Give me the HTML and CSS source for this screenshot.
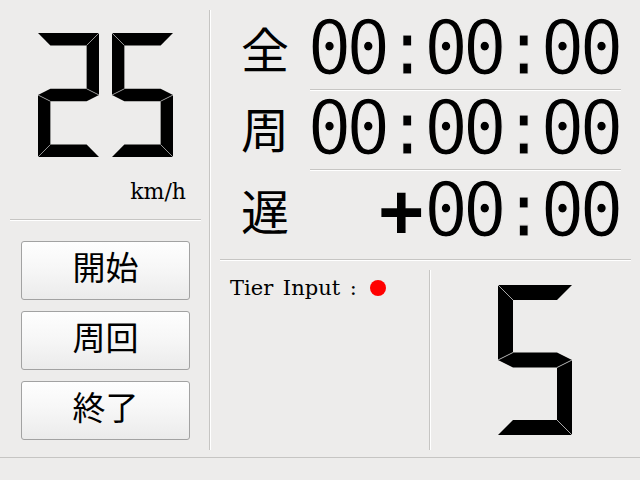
FILE: index.html
```html
<!DOCTYPE html>
<html lang="ja">
<head>
<meta charset="utf-8">
<title>Cycle Meter</title>
<link rel="stylesheet" href="styles.css">
</head>
<body>
<svg class="defs" width="0" height="0">
  <defs>
    <symbol id="d2" viewBox="0 0 74 150">
      <polygon points="0,0 74,0 59,15 15,15"/>
      <polygon points="74,0 74,75 59,67.5 59,15"/>
      <polygon points="0,75 15,67.5 59,67.5 74,75 59,82.5 15,82.5"/>
      <polygon points="0,75 15,82.5 15,135 0,150"/>
      <polygon points="0,150 15,135 59,135 74,150"/>
      <g class="seam">
        <line x1="74" y1="0" x2="59" y2="15"/>
        <line x1="74" y1="75" x2="59" y2="67.5"/>
        <line x1="0" y1="75" x2="15" y2="82.5"/>
        <line x1="0" y1="150" x2="15" y2="135"/>
      </g>
    </symbol>
    <symbol id="d5" viewBox="0 0 74 150">
      <polygon points="0,0 74,0 59,15 15,15"/>
      <polygon points="0,0 15,15 15,67.5 0,75"/>
      <polygon points="0,75 15,67.5 59,67.5 74,75 59,82.5 15,82.5"/>
      <polygon points="74,75 74,150 59,135 59,82.5"/>
      <polygon points="0,150 15,135 59,135 74,150"/>
      <g class="seam">
        <line x1="0" y1="0" x2="15" y2="15"/>
        <line x1="0" y1="75" x2="15" y2="67.5"/>
        <line x1="74" y1="75" x2="59" y2="82.5"/>
        <line x1="74" y1="150" x2="59" y2="135"/>
      </g>
    </symbol>
  </defs>
</svg>
<div class="window">
  <div class="main">
    <div class="left">
      <div class="speed">
        <div class="lcd-speed">
          <svg viewBox="0 0 74 150" preserveAspectRatio="none"><use href="#d2"/></svg>
          <svg viewBox="0 0 74 150" preserveAspectRatio="none"><use href="#d5"/></svg>
        </div>
        <div class="unit">km/h</div>
      </div>
      <div class="hsep"></div>
      <div class="buttons">
        <div class="btn">開始</div>
        <div class="btn">周回</div>
        <div class="btn">終了</div>
      </div>
    </div>
    <div class="vsep"></div>
    <div class="right">
      <div class="times">
        <div class="label r1">全</div>
        <div class="time r1"><span>00:00:00</span></div>
        <div class="tsep s1"></div>
        <div class="label r2">周</div>
        <div class="time r2"><span>00:00:00</span></div>
        <div class="tsep s2"></div>
        <div class="label r3">遅</div>
        <div class="time r3"><span><span class="plus">+</span>00:00</span></div>
      </div>
      <div class="hsep wide"></div>
      <div class="bottom">
        <div class="tier">Tier Input : <span class="dot"></span></div>
        <div class="vsep short"></div>
        <div class="gear">
          <svg viewBox="0 0 74 150"><use href="#d5"/></svg>
        </div>
      </div>
    </div>
  </div>
  <div class="status"></div>
</div>
</body>
</html>
```

FILE: styles.css
```css
html, body {
  margin: 0;
  padding: 0;
}
body {
  width: 640px;
  height: 480px;
  overflow: hidden;
  background: #edeceb;
  font-family: "DejaVu Serif", serif;
  color: #000;
}
.defs {
  position: absolute;
  width: 0;
  height: 0;
}
.seam line {
  stroke: #a8a8a8;
  stroke-width: 1;
}
.window {
  display: flex;
  flex-direction: column;
  height: 480px;
}
.main {
  display: flex;
  height: 457px;
  box-sizing: border-box;
  padding: 10px 0 7px 0;
}
.left {
  flex: 0 0 209px;
  width: 209px;
  box-sizing: border-box;
  padding: 0 8px 0 10px;
  display: flex;
  flex-direction: column;
}
.speed {
  height: 209px;
  display: flex;
  flex-direction: column;
}
.lcd-speed {
  display: flex;
  justify-content: center;
  gap: 13px;
  margin-top: 23px;
  height: 124px;
}
.lcd-speed svg {
  width: 61px;
  height: 124px;
  display: block;
}
.unit {
  text-align: right;
  padding-right: 15px;
  margin-top: 22px;
  font-size: 22px;
  line-height: 26px;
}
.hsep {
  height: 0;
  border-top: 1px solid #c6c5c3;
  border-bottom: 1px solid #ffffff;
}
.buttons {
  display: flex;
  flex-direction: column;
  gap: 11px;
  margin-top: 20px;
  padding-left: 11px;
}
.btn {
  width: 169px;
  height: 59px;
  box-sizing: border-box;
  padding-bottom: 8px;
  border: 1px solid #a2a2a2;
  border-radius: 3px;
  background: linear-gradient(#fefefe 0%, #f7f7f7 45%, #ebebeb 100%);
  font-family: "Noto Sans CJK JP", sans-serif;
  font-size: 33px;
  line-height: 1;
  display: flex;
  align-items: center;
  justify-content: center;
}
.vsep {
  flex: 0 0 auto;
  width: 0;
  border-left: 1px solid #c6c5c3;
  border-right: 1px solid #ffffff;
}
.right {
  flex: 1 1 0;
  min-width: 0;
  box-sizing: border-box;
  padding: 0 9px;
  display: flex;
  flex-direction: column;
}
.times {
  display: grid;
  grid-template-columns: 90px minmax(0, 1fr);
  grid-template-rows: 79px 2px 78px 2px 88px;
}
.label {
  grid-column: 1;
  font-family: "Noto Sans CJK JP", sans-serif;
  font-size: 48px;
  line-height: 1;
  text-align: center;
  align-self: center;
  padding-bottom: 6px;
}
.label.r3 {
  padding-bottom: 12px;
}
.time {
  grid-column: 2;
  min-width: 0;
  display: flex;
  justify-content: flex-end;
  font-family: "DejaVu Sans Mono", monospace;
  font-size: 74px;
  line-height: 1;
  letter-spacing: -5.7px;
  -webkit-text-stroke: 1.2px #edeceb;
  align-self: center;
  padding-right: 13px;
  padding-bottom: 4px;
  white-space: nowrap;
}
.time.r3 {
  padding-bottom: 11px;
}
.time > span {
  flex: 0 0 auto;
}
.r1 { grid-row: 1; }
.r2 { grid-row: 3; }
.r3 { grid-row: 5; }
.tsep {
  grid-column: 2;
  margin-right: 10px;
  border-top: 1px solid #c6c5c3;
  border-bottom: 1px solid #ffffff;
  height: 0;
}
.s1 { grid-row: 2; }
.s2 { grid-row: 4; }
.plus {
  font-weight: bold;
  -webkit-text-stroke: 0;
  margin-right: 6px;
}
.bottom {
  flex: 1;
  display: flex;
}
.tier {
  flex: 0 0 209px;
  width: 209px;
  box-sizing: border-box;
  padding: 14px 0 0 10px;
  font-size: 21px;
  line-height: 26px;
  word-spacing: 3px;
  white-space: nowrap;
}
.dot {
  display: inline-block;
  width: 16px;
  height: 16px;
  border-radius: 50%;
  background: #ff0000;
  vertical-align: -1px;
  margin-left: 3px;
}
.vsep.short {
  margin-top: 9px;
}
.gear {
  padding: 24px 0 0 67px;
}
.gear svg {
  width: 74px;
  height: 150px;
  display: block;
}
.status {
  flex: 1;
  border-top: 1px solid #c6c5c3;
}
```
